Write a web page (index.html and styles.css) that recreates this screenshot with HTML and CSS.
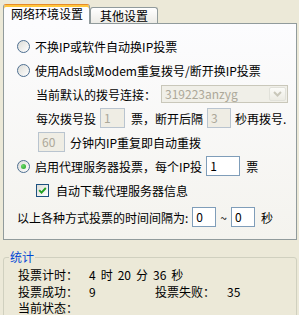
FILE: index.html
```html
<!DOCTYPE html>
<html lang="zh-CN">
<head>
    <meta charset="UTF-8">
    <title>投票设置</title>
    <link rel="stylesheet" href="styles.css">
</head>
<body>
    <div class="tabs">
        <div class="tab active">网络环境设置</div>
        <div class="tab">其他设置</div>
    </div>
    <div class="panel">
        <div class="row opt"><span class="radio"></span>不换IP或软件自动换IP投票</div>
        <div class="row opt"><span class="radio"></span>使用Adsl或Modem重复拨号/断开换IP投票</div>
        <div class="row sub">
            当前默认的拨号连接：
            <div class="select">
                <span class="select-text">319223anzyg</span>
                <span class="select-btn">
                    <svg width="9" height="6" viewBox="0 0 9 6"><path d="M1 1 L4.5 4.5 L8 1" fill="none" stroke="#C9C7BA" stroke-width="2"/></svg>
                </span>
            </div>
        </div>
        <div class="row sub">
            每次拨号投<span class="field off w25">1</span>票，断开后隔<span class="field off w24 tight">3</span>秒再拨号.
        </div>
        <div class="row sub2">
            <span class="field off w27 first">60</span>分钟内IP重复即自动重拨
        </div>
        <div class="row opt"><span class="radio on"></span>启用代理服务器投票，每个IP投<span class="field w34">1</span>票</div>
        <div class="row sub"><span class="check"><svg width="11" height="11" viewBox="0 0 11 11"><path d="M2.2 5.2 L4.5 7.6 L8.8 3" fill="none" stroke="#21A121" stroke-width="1.9"/></svg></span>自动下载代理服务器信息</div>
        <div class="row last">
            以上各种方式投票的时间间隔为:<span class="field w24 tight">0</span>~<span class="field w24">0</span>秒
        </div>
    </div>
    <fieldset class="stats">
        <legend>统计</legend>
        <div class="stats-grid">
            <span>投票计时：</span>
            <span class="timer"><span>4</span><span>时</span><span>20</span><span>分</span><span>36</span><span>秒</span></span>
            <span>投票成功：</span>
            <span>9</span>
            <span>投票失败：</span>
            <span>35</span>
            <span>当前状态：</span>
        </div>
    </fieldset>
</body>
</html>
```

FILE: styles.css
```css
body {
    margin: 0;
    width: 299px;
    height: 315px;
    overflow: hidden;
    background-color: #ECE9D8;
    font-family: "Noto Sans CJK SC", sans-serif;
    font-size: 12px;
    color: #000;
}
.tabs {
    display: flex;
    align-items: flex-end;
    padding: 4px 0 0 3px;
}
.tab {
    box-sizing: border-box;
    height: 16px;
    line-height: 15px;
    padding: 0 9px;
    border: 1px solid #919B9C;
    border-bottom: 0;
    border-radius: 3px 3px 0 0;
    background: linear-gradient(#FFFFFF, #ECEBE6);
}
.tab.active {
    position: relative;
    z-index: 1;
    height: 20px;
    line-height: 18px;
    padding: 0 6px 0 7px;
    margin-bottom: -1px;
    border-top-color: #E68B2C;
    box-shadow: inset 0 2px #FFC73C;
    background: #FCFCFE;
}
.panel {
    margin: 0 2px 0 3px;
    padding: 10px 0;
    border: 1px solid #919B9C;
    background: linear-gradient(#FCFCFE, #F4F3EE);
}
.row {
    display: flex;
    align-items: center;
    height: 24px;
    white-space: nowrap;
}
.opt { padding-left: 13px; }
.sub { padding-left: 32px; }
.sub2 { padding-left: 34px; }
.last {
    padding-left: 13px;
    margin-top: 3px;
}
.radio {
    box-sizing: border-box;
    width: 13px;
    height: 13px;
    margin-right: 5px;
    border: 1px solid #4E6F91;
    border-radius: 50%;
    background: linear-gradient(135deg, #DCDCD7, #FFFFFF);
    display: flex;
    align-items: center;
    justify-content: center;
}
.radio.on::after {
    content: "";
    width: 5px;
    height: 5px;
    border-radius: 50%;
    background: radial-gradient(circle at 35% 35%, #6CD96A, #21A121);
}
.check {
    box-sizing: border-box;
    width: 13px;
    height: 13px;
    margin-right: 7px;
    border: 1px solid #1C5180;
    background: linear-gradient(135deg, #DCDCD7, #FFFFFF);
    display: flex;
}
.check svg { display: block; }
.field {
    box-sizing: border-box;
    height: 20px;
    line-height: 18px;
    padding: 0 3px;
    margin: 0 6px 0 4px;
    border: 1px solid #7F9DB9;
    background: #FFFFFF;
}
.field.off {
    border-color: #B9C4CF;
    background: #EFEDE4;
    color: #ACA899;
}
.field.tight { margin-right: 4px; }
.field.first { margin: 0 5px 0 0; }
.w24 { width: 24px; }
.w25 { width: 25px; }
.w27 { width: 27px; }
.w34 { width: 34px; }
.select {
    box-sizing: border-box;
    display: flex;
    align-items: center;
    width: 127px;
    height: 18px;
    margin-left: 5px;
    padding: 1px;
    border: 1px solid #C9C7BA;
    background: #F0EFE8;
}
.select-text {
    flex: 1;
    padding-left: 2px;
    color: #ACA899;
    line-height: 14px;
}
.select-btn {
    box-sizing: border-box;
    width: 17px;
    height: 14px;
    display: flex;
    align-items: center;
    justify-content: center;
    border: 1px solid #E1E1DA;
    border-radius: 2px;
    background: linear-gradient(#FBFBF8, #ECEBE3);
}
.stats {
    margin: 10px 2px 0 3px;
    padding: 0;
    border: 1px solid #D0D0BF;
    border-radius: 3px;
}
.stats legend {
    margin-left: 5px;
    padding: 0 1px;
    line-height: 14px;
    color: #0046D5;
}
.stats-grid {
    display: grid;
    grid-template-columns: 71px 66px 72px 1fr;
    line-height: 16.5px;
    padding: 3px 0 0 14px;
}
.timer {
    grid-column: 2 / 5;
    display: flex;
    gap: 5px;
}
```
